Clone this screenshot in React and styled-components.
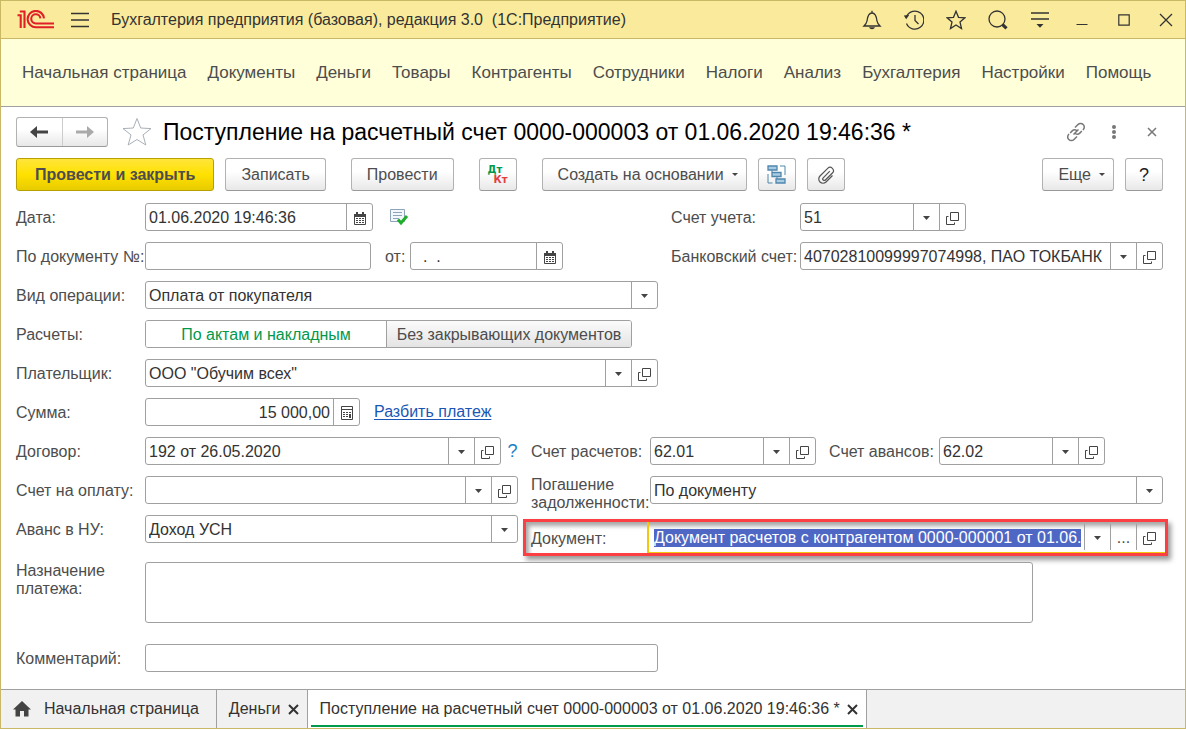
import React, { useEffect, useId, useRef, useState } from "react";
import styled, { createGlobalStyle, css } from "styled-components";

const line = "#a0a0a0";
const ink = "#4d4d4d";

const GlobalStyle = createGlobalStyle`
  *, *::before, *::after { box-sizing: border-box; }
  body { margin: 0; background: #fff; }
  body, button, input, select, textarea {
    font-family: "Liberation Sans", Arial, sans-serif;
    font-size: 16px;
    line-height: 18px;
    color: ${ink};
  }
  button { cursor: pointer; }
`;

const Window = styled.div`
  min-height: 100vh;
  display: flex;
  flex-direction: column;
  border: 1px solid #c9b967;
  background: #fff;
`;

const TitleBar = styled.header`
  display: flex;
  align-items: center;
  height: 38px;
  padding-left: 16px;
  background: #faeb9c;
  border-bottom: 1px solid #c9b967;
`;

const AppTitle = styled.div`
  flex: 1;
  margin-left: 21px;
  color: #333;
  white-space: pre;
  overflow: hidden;
`;

const PlainButton = styled.button`
  display: flex;
  align-items: center;
  justify-content: center;
  padding: 0;
  border: 0;
  background: none;
  color: ${(p) => p.$color || "#333"};
`;

const MenuToggle = styled(PlainButton)`
  width: 20px;
  height: 20px;
  margin-left: 15px;
`;

const WindowTools = styled.div`
  display: flex;
  gap: 4px;
  ${PlainButton} { width: 38px; height: 36px; }
`;

const MainMenu = styled.nav`
  display: flex;
  flex-wrap: wrap;
  align-items: center;
  gap: 4px 21px;
  min-height: 68px;
  padding: 0 21px;
  background: #ffffd9;
  border-bottom: 1px solid ${line};
`;

const MenuLink = styled.a`
  font-size: 17px;
  line-height: 20px;
  color: ${ink};
  text-decoration: none;
`;

const Page = styled.main`
  flex: 1;
  display: flex;
  flex-direction: column;
  padding: 10px 22px 17px 15px;
`;

const PageHead = styled.div`
  display: flex;
  align-items: center;
  min-height: 30px;
`;

const face = css`
  border: 1px solid #b2b2b2;
  border-bottom-color: #999;
  border-radius: 3px;
  background: linear-gradient(#fff 40%, #e8e8e8);
`;

const NavPair = styled.div`
  ${face}
  display: flex;
  width: 92px;
  height: 30px;
  ${PlainButton} { flex: 1; }
  ${PlainButton} + ${PlainButton} { border-left: 1px solid #ccc; }
`;

const FavButton = styled(PlainButton)`
  width: 30px;
  height: 30px;
  margin: 0 11px 0 14px;
`;

const PageTitle = styled.h1`
  flex: 1;
  margin: 0;
  font-size: 23px;
  line-height: 28px;
  font-weight: 400;
  color: #000;
`;

const HeadTools = styled.div`
  display: flex;
  gap: 16px;
  ${PlainButton} { width: 22px; height: 24px; }
`;

const Toolbar = styled.div`
  display: flex;
  justify-content: space-between;
  gap: 11px;
  margin-top: 11px;
`;

const ToolSets = styled.div`
  display: flex;
  gap: 25px;
`;

const ToolSet = styled.div`
  display: flex;
  gap: 11px;
`;

const Button = styled.button`
  ${face}
  display: flex;
  align-items: center;
  justify-content: center;
  gap: 8px;
  height: 33px;
  padding: 0 ${(p) => (p.$menu ? 8 : 15)}px 0 15px;
  white-space: nowrap;
  ${(p) => p.$square && "width: 38px; padding: 0; color: #222; font-size: 18px;"}
  ${(p) =>
    p.$primary &&
    `padding: 0 18px; border-color: #b7a000; background: linear-gradient(#ffe53b, #ffe100 50%, #e8cb00); font-weight: 700;`}
`;

const Posting = styled.span`
  display: flex;
  flex-direction: column;
  width: 20px;
  font: 700 10px/10px "DejaVu Sans", sans-serif;
  color: #00994d;
  text-align: left;
`;

const Credit = styled.span`
  color: #e0403f;
  text-align: right;
`;

const Form = styled.form`
  display: flex;
  flex-direction: column;
  gap: 11px;
  margin-top: 12px;
`;

const Row = styled.div`
  display: flex;
  align-items: ${(p) => (p.$top ? "flex-start" : "center")};
  min-height: 28px;
`;

const Half = styled.div`
  display: flex;
  align-items: center;
  flex: ${(p) => (p.$fill ? "1" : "0 0 655px")};
`;

const Columns = styled.div`
  display: flex;
  gap: 13px;
`;

const Column = styled.div`
  display: flex;
  flex-direction: column;
  gap: 11px;
  flex: ${(p) => (p.$fill ? "1" : "0 0 502px")};
`;

const Label = styled.label`
  flex: 0 0 ${(p) => p.$width || 129}px;
  padding-top: ${(p) => (p.$wrap ? 0 : 2)}px;
  white-space: ${(p) => (p.$wrap ? "normal" : "nowrap")};
  ${(p) => p.$gap && `margin-left: ${p.$gap}px;`}
`;

const Box = styled.div`
  display: flex;
  flex: ${(p) => (p.$width ? `0 0 ${p.$width}px` : "1")};
  min-width: 0;
  height: 28px;
  border: 1px solid ${line};
  border-radius: 3px;
  overflow: hidden;
`;

const ActiveBox = styled(Box)`
  height: 31px;
  padding: 2px 3px 2px 2px;
  border: 0;
  border-left: 2px solid #f2c80f;
  border-bottom: 1px solid #f2c80f;
  border-radius: 0;
`;

const Input = styled.input`
  flex: 1;
  width: 0;
  min-width: 0;
  padding: 2px 3px 0;
  border: 0;
  outline: 0;
  background: none;
  color: #333;
  text-align: ${(p) => (p.$right ? "right" : "left")};
  &::selection { background: #4f67c4; color: #fff; }
`;

const CellButton = styled.button`
  display: flex;
  align-items: center;
  justify-content: center;
  flex: 0 0 26px;
  padding: 2px 0 0;
  border: 0;
  border-left: 1px solid ${line};
  background: none;
`;

const SelectBox = styled(Box)`
  display: grid;
  grid-template-columns: 1fr 26px;
`;

const Select = styled.select`
  grid-area: 1 / 1 / 2 / 3;
  min-width: 0;
  padding: 2px 3px 0;
  border: 0;
  outline: 0;
  appearance: none;
  background: none;
  color: #333;
`;

const SelectArrow = styled.span`
  grid-area: 1 / 2;
  display: flex;
  align-items: center;
  justify-content: center;
  padding-top: 2px;
  border-left: 1px solid ${line};
  pointer-events: none;
`;

const TextArea = styled.textarea`
  flex: 0 1 888px;
  height: 61px;
  padding: 4px;
  border: 1px solid ${line};
  border-radius: 3px;
  resize: none;
  outline: 0;
`;

const Switcher = styled.div`
  display: grid;
  grid-template-columns: 240px 1fr;
  width: 487px;
  height: 28px;
  border: 1px solid ${line};
  border-radius: 3px;
  overflow: hidden;
`;

const Option = styled.label`
  display: flex;
  align-items: center;
  justify-content: center;
  padding-top: 2px;
  background: linear-gradient(#fbfbfb, #e4e4e4);
  white-space: nowrap;
  & + & { border-left: 1px solid ${line}; }
  &:has(input:checked) { background: #fff; color: #00994d; }
  input { appearance: none; width: 0; margin: 0; outline: 0; }
`;

const SplitLink = styled.a`
  margin-left: 14px;
  color: #1a57b5;
  text-decoration: underline;
  text-underline-offset: 2px;
`;

const Hint = styled(PlainButton)`
  width: 11px;
  margin-left: 6px;
  color: #1a80c4;
  font-size: 18px;
`;

const PostedMark = styled.span`
  display: flex;
  margin-left: 16px;
`;

const Callout = styled.div`
  display: flex;
  align-items: center;
  margin: -4px -5px -13px -8px;
  padding-left: 5px;
  border: 3px solid #fb3f42;
  box-shadow: 3px 4px 5px rgba(0, 0, 0, 0.4), inset 3px 4px 4px rgba(0, 0, 0, 0.35);
`;

const Purpose = styled(Row)`
  align-items: flex-start;
  margin-top: 8px;
`;

const Comment = styled(Row)`
  margin-top: 10px;
`;

const TabBar = styled.nav`
  display: flex;
  height: 39px;
  background: #f1f1f1;
  border-top: 1px solid ${line};
`;

const Tab = styled.div`
  display: flex;
  align-items: center;
  gap: 5px;
  padding: 0 ${(p) => (p.$home ? 17 : 6)}px 0 12px;
  border-right: 1px solid ${line};
  ${(p) =>
    p.$active &&
    `background: linear-gradient(#00994d, #00994d) 3px 35px / calc(100% - 6px) 2px no-repeat #fff;`}
`;

const TabLink = styled.a`
  display: flex;
  align-items: center;
  gap: 13px;
  color: #333;
  text-decoration: none;
  white-space: nowrap;
`;

const TabClose = styled(PlainButton)`
  width: 15px;
  height: 18px;
`;

const Svg = ({ w, h, children, sw = 1.3, ...rest }) => (
  <svg width={w} height={h} viewBox={`0 0 ${w} ${h}`} fill="none" stroke="currentColor" strokeWidth={sw} aria-hidden="true" {...rest}>
    {children}
  </svg>
);

const Logo = () => (
  <Svg w={38} h={19} sw={2.1} color="#e01f26">
    <path d="M.5 5.3h3.2V18M2.800 1.500h4.700V18" />
    <path d="M27 8.400A8.200 8.200 0 1 0 19 17.300H37" />
    <path d="M23.400 8.400A4.600 4.600 0 1 0 19 13.500H37" />
  </Svg>
);

const Burger = () => <Svg w={18} h={16} sw={1.4}><path d="M0 1.500h18M0 8h18M0 14.500h18" /></Svg>;
const Bell = () => (
  <Svg w={20} h={20}>
    <path d="M10 .8v2M2 16h16c-1.400-1.300-2.600-2.800-3-5-.4-3.600-1-8-5-8s-4.600 4.400-5 8c-.4 2.200-1.600 3.700-3 5z" />
    <path d="M7 17.300h6c-.5 1.200-1.600 1.900-3 1.900s-2.500-.7-3-1.900z" fill="currentColor" stroke="none" />
  </Svg>
);
const History = () => (
  <Svg w={20} h={20}>
    <path d="M2.600 6.500A9 9 0 1 1 2.500 13.500M11 5v5.500l3.500 3.500" />
    <path d="M-.2 5.500l5.400-.5-3 4.200z" fill="currentColor" stroke="none" />
  </Svg>
);
const Star = () => <Svg w={20} h={20}><path d="M10 1.200l2.500 6.100 6.400.5-4.900 4.200 1.500 6.500L10 15l-5.500 3.500L6 12 1.100 7.800l6.400-.5z" /></Svg>;
const Search = () => <Svg w={20} h={20}><circle cx="9" cy="9" r="8" /><path d="M14.300 14.300l4.200 4" strokeWidth="3.200" /></Svg>;
const Settings = () => <Svg w={18} h={18} sw={1.5}><path d="M0 2h18M0 8h18" /><path d="M5.500 13h7L9 16.800z" fill="currentColor" stroke="none" /></Svg>;
const Minimize = () => <Svg w={12} h={12} sw={1}><path d="M.5 10.500h11" /></Svg>;
const Maximize = () => <Svg w={12} h={12} sw={1.2}><path d="M.8 .8h10.400v10.400H.8z" /></Svg>;
const Close = () => <Svg w={14} h={14}><path d="M1 1l12 12M13 1L1 13" /></Svg>;
const Back = () => <Svg w={18} h={14} sw={3}><path d="M6 7h12" /><path d="M0 7l7-6v12z" fill="currentColor" stroke="none" /></Svg>;
const Forward = () => <Svg w={18} h={14} sw={3}><path d="M0 7h12" /><path d="M18 7l-7-6v12z" fill="currentColor" stroke="none" /></Svg>;
const BigStar = () => <Svg w={30} h={30} sw={1}><path d="M15 1.500l3.700 9.500 10.300.6-8 6.300 2.800 10.100L15 22.500 6.200 28 9 17.900 1 11.600l10.300-.6z" /></Svg>;
const Chain = () => (
  <Svg w={20} h={20} sw={1.5}>
    <path d="M9 5.500l3-3a3.600 3.600 0 0 1 5.200 0 3.600 3.600 0 0 1 0 5.200l-3.400 3.400a3.600 3.600 0 0 1-4.600.4M11 14.500l-3 3a3.600 3.600 0 0 1-5.200 0 3.600 3.600 0 0 1 0-5.200l3.400-3.400a3.600 3.600 0 0 1 4.600-.4M7.500 12.500l5-5" strokeDasharray="16 1.500" />
  </Svg>
);
const Dots = () => (
  <Svg w={4} h={14}>
    {[2, 7, 12].map((y) => <circle key={y} cx="2" cy={y} r="2" fill="currentColor" stroke="none" />)}
  </Svg>
);
const SmallClose = () => <Svg w={10} h={10} sw={1.5}><path d="M1 1l8 8M9 1L1 9" /></Svg>;
const TabCross = () => <Svg w={11} h={11} sw={2}><path d="M1 1l9 9M10 1L1 10" /></Svg>;
const Caret = () => <Svg w={7} h={4}><path d="M0 0h7L3.500 4z" fill="#444" stroke="none" /></Svg>;
const SmallCaret = () => <Svg w={6} h={3}><path d="M0 0h6L3 3z" fill="#444" stroke="none" /></Svg>;
const OpenIcon = () => <Svg w={13} h={13} sw={1} color="#444"><path d="M4.500 .5h8v8h-8zM2.500 4.500h-2v8h8v-2" /></Svg>;
const Calendar = () => (
  <Svg w={12} h={13} sw={1} color="#444">
    <path d="M.5 2.500h11v10H.5z" /><path d="M0 2h12v3H0z" fill="currentColor" stroke="none" />
    <path d="M3 0v3M9 0v3" strokeWidth="2" />
    <path d="M2 6.500h8M2 8.500h8M2 10.500h8" strokeDasharray="2 1" />
  </Svg>
);
const Calculator = () => (
  <Svg w={12} h={14} sw={1} color="#444">
    <path d="M.5 .5h11v13H.5zM.5 3.500h11" /><path d="M2 6.500h8M2 8.500h8M2 10.500h8" strokeDasharray="2 1" />
    <path d="M9 8v4" strokeWidth="2" />
  </Svg>
);
const Structure = () => (
  <Svg w={20} h={19} color="#4f87ad">
    <path d="M1 1h9v4H1zM5 7.500h9v4H5zM9 14h9v4H9z" fill="#a9cbe3" />
    <path d="M5 5v2.500M10 11.500V14M13 1h5v9M1 9v9h4.500" strokeWidth="1" />
  </Svg>
);
const Clip = () => (
  <Svg w={18} h={18} sw={1.2} color="#555">
    <path d="M12.800 5.200l-6.600 6.600a1.500 1.500 0 0 0 2.200 2.200l7-7a3.300 3.300 0 0 0-4.700-4.700L3 10a4.200 4.200 0 0 0 6 6l6.500-6.500" />
  </Svg>
);
const Posted = () => (
  <Svg w={20} h={18} sw={1}>
    <path d="M1.500 1.500h14v12h-14z" fill="#f3f7fb" stroke="#8ea4b8" />
    <path d="M4 4.500h9M4 7.500h9M4 10.500h6" stroke="#8ea4b8" />
    <path d="M9 11.500l3 3.500 6-7" stroke="#1fae2c" strokeWidth="3" />
  </Svg>
);
const Home = () => <Svg w={18} h={16}><path d="M9 0L0 8.500h2.500V15.500H7V10h4v5.500h4.500V8.500H18L15 5.700z" fill="#444" stroke="none" /></Svg>;

const icons = {
  list: ["Выбрать из списка", Caret],
  open: ["Открыть", OpenIcon],
  date: ["Календарь", Calendar],
  calc: ["Калькулятор", Calculator],
  more: ["Показать все", () => "..."],
};

function Field({ label, labelWidth, gap, value = "", width, cells = [], right, selected }) {
  const id = useId();
  const ref = useRef(null);
  useEffect(() => {
    if (selected) {
      const input = ref.current;
      input.focus();
      input.setSelectionRange(0, input.value.length, "backward");
      input.scrollLeft = 0;
    }
  }, [selected]);
  const Frame = selected ? ActiveBox : Box;
  return (
    <>
      <Label htmlFor={id} $width={labelWidth} $gap={gap}>{label}</Label>
      <Frame $width={width}>
        <Input ref={ref} id={id} defaultValue={value} $right={right} />
        {cells.map((c) => {
          const [title, Icon] = icons[c];
          return <CellButton key={c} type="button" aria-label={title}><Icon /></CellButton>;
        })}
      </Frame>
    </>
  );
}

function Choice({ label, labelWidth, value, width, wrap }) {
  const id = useId();
  return (
    <>
      <Label htmlFor={id} $width={labelWidth} $wrap={wrap}>{label}</Label>
      <SelectBox $width={width}>
        <Select id={id} defaultValue={value}><option>{value}</option></Select>
        <SelectArrow><Caret /></SelectArrow>
      </SelectBox>
    </>
  );
}

const sections = ["Начальная страница", "Документы", "Деньги", "Товары", "Контрагенты", "Сотрудники", "Налоги", "Анализ", "Бухгалтерия", "Настройки", "Помощь"];
const windowTools = [["Уведомления", Bell], ["История", History], ["Избранное", Star], ["Поиск", Search], ["Настройка", Settings], ["Свернуть", Minimize], ["Развернуть", Maximize], ["Закрыть", Close]];
const docTitle = "Поступление на расчетный счет 0000-000003 от 01.06.2020 19:46:36 *";
const modes = ["По актам и накладным", "Без закрывающих документов"];

export default function App() {
  const [mode, setMode] = useState(modes[0]);
  return (
    <Window>
      <GlobalStyle />
      <TitleBar>
        <Logo />
        <MenuToggle aria-label="Меню"><Burger /></MenuToggle>
        <AppTitle>{"Бухгалтерия предприятия (базовая), редакция 3.0  (1С:Предприятие)"}</AppTitle>
        <WindowTools>
          {windowTools.map(([name, Icon]) => <PlainButton key={name} aria-label={name}><Icon /></PlainButton>)}
        </WindowTools>
      </TitleBar>
      <MainMenu>
        {sections.map((s) => <MenuLink key={s} href="#">{s}</MenuLink>)}
      </MainMenu>
      <Page>
        <PageHead>
          <NavPair>
            <PlainButton $color="#444" aria-label="Назад"><Back /></PlainButton>
            <PlainButton $color="#aaa" aria-label="Вперед"><Forward /></PlainButton>
          </NavPair>
          <FavButton $color="#aab0b8" aria-label="В избранное"><BigStar /></FavButton>
          <PageTitle>{docTitle}</PageTitle>
          <HeadTools>
            <PlainButton $color="#777" aria-label="Ссылка"><Chain /></PlainButton>
            <PlainButton $color="#777" aria-label="Действия"><Dots /></PlainButton>
            <PlainButton $color="#777" aria-label="Закрыть документ"><SmallClose /></PlainButton>
          </HeadTools>
        </PageHead>
        <Toolbar>
          <ToolSets>
            <ToolSet>
              <Button $primary>Провести и закрыть</Button>
              <Button>Записать</Button>
            </ToolSet>
            <Button>Провести</Button>
            <Button $square aria-label="Дт Кт"><Posting>Дт<Credit>Кт</Credit></Posting></Button>
            <ToolSet>
              <Button $menu>Создать на основании<SmallCaret /></Button>
              <Button $square aria-label="Структура подчиненности"><Structure /></Button>
              <Button $square aria-label="Файлы"><Clip /></Button>
            </ToolSet>
          </ToolSets>
          <ToolSet>
            <Button $menu>Еще<SmallCaret /></Button>
            <Button $square>?</Button>
          </ToolSet>
        </Toolbar>
        <Form onSubmit={(e) => e.preventDefault()}>
          <Row>
            <Half>
              <Field label="Дата:" value="01.06.2020 19:46:36" width={228} cells={["date"]} />
              <PostedMark><Posted /></PostedMark>
            </Half>
            <Half $fill><Field label="Счет учета:" value="51" width={166} cells={["list", "open"]} /></Half>
          </Row>
          <Row>
            <Half>
              <Field label="По документу №:" width={226} />
              <Field label="от:" labelWidth={25} gap={14} value="  .  ." width={153} cells={["date"]} />
            </Half>
            <Half $fill><Field label="Банковский счет:" value="40702810099997074998, ПАО ТОКБАНК" cells={["list", "open"]} /></Half>
          </Row>
          <Row><Choice label="Вид операции:" value="Оплата от покупателя" width={513} /></Row>
          <Row role="radiogroup" aria-label="Расчеты">
            <Label as="span">Расчеты:</Label>
            <Switcher>
              {modes.map((m) => (
                <Option key={m}>
                  <input type="radio" name="mode" checked={mode === m} onChange={() => setMode(m)} />
                  {m}
                </Option>
              ))}
            </Switcher>
          </Row>
          <Row><Field label="Плательщик:" value={'ООО "Обучим всех"'} width={513} cells={["list", "open"]} /></Row>
          <Row>
            <Field label="Сумма:" value="15 000,00" width={215} cells={["calc"]} right />
            <SplitLink href="#">Разбить платеж</SplitLink>
          </Row>
          <Columns>
            <Column>
              <Row>
                <Field label="Договор:" value="192 от 26.05.2020" cells={["list", "open"]} />
                <Hint type="button">?</Hint>
              </Row>
              <Row><Field label="Счет на оплату:" cells={["list", "open"]} /></Row>
              <Row><Choice label="Аванс в НУ:" value="Доход УСН" /></Row>
            </Column>
            <Column $fill>
              <Row>
                <Field label="Счет расчетов:" labelWidth={119} value="62.01" width={166} cells={["list", "open"]} />
                <Field label="Счет авансов:" labelWidth={110} gap={13} value="62.02" width={166} cells={["list", "open"]} />
              </Row>
              <Row $top><Choice label="Погашение задолженности:" labelWidth={119} value="По документу" wrap /></Row>
              <Callout>
                <Field label="Документ:" labelWidth={116} value="Документ расчетов с контрагентом 0000-000001 от 01.06.2020 12:00:00" cells={["list", "more", "open"]} selected />
              </Callout>
            </Column>
          </Columns>
          <Purpose>
            <Label htmlFor="purpose" $wrap>Назначение платежа:</Label>
            <TextArea id="purpose" />
          </Purpose>
          <Comment><Field label="Комментарий:" width={513} /></Comment>
        </Form>
      </Page>
      <TabBar>
        <Tab $home><TabLink href="#"><Home />Начальная страница</TabLink></Tab>
        <Tab><TabLink href="#">Деньги</TabLink><TabClose aria-label="Закрыть Деньги"><TabCross /></TabClose></Tab>
        <Tab $active><TabLink href="#">{docTitle}</TabLink><TabClose aria-label="Закрыть документ"><TabCross /></TabClose></Tab>
      </TabBar>
    </Window>
  );
}
